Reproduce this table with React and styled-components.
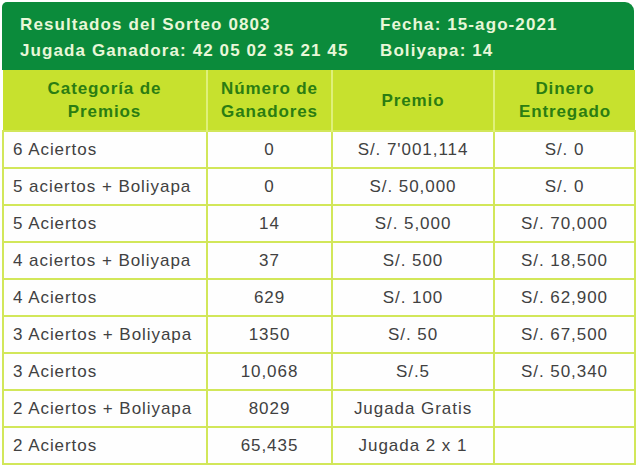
import React from 'react';
import styled, { createGlobalStyle } from 'styled-components';

const GlobalStyle = createGlobalStyle`
  body {
    margin: 0;
    background: #ffffff;
    font-family: "Liberation Sans", Arial, sans-serif;
  }
`;

const Card = styled.div`
  width: 632px;
  margin: 2px 0 0 2px;
`;

const Banner = styled.div`
  display: grid;
  grid-template-columns: 360px 1fr;
  height: 68px;
  box-sizing: border-box;
  padding: 10px 18px 0 18px;
  background: #0b8b3b;
  border-radius: 5px 9px 0 0;
  color: #e8f7d8;
  font-weight: 700;
  font-size: 17px;
  letter-spacing: 1.1px;
  line-height: 26px;
`;

const BannerCol = styled.div`
  display: flex;
  flex-direction: column;
`;

const Table = styled.table`
  width: 632px;
  border-collapse: collapse;
  table-layout: fixed;
  font-family: "Liberation Sans", Arial, sans-serif;
`;

const HeadCell = styled.th`
  height: 60px;
  padding: 0 4px;
  background: #c7e12e;
  color: #2b7d12;
  font-size: 17px;
  font-weight: 700;
  letter-spacing: 0.9px;
  line-height: 23px;
  text-align: center;
  border-left: 2px solid #dff07a;
  &:first-child {
    border-left: none;
  }
`;

const Row = styled.tr`
  height: 37px;
`;

const Cell = styled.td`
  padding: 0 0 0 ${(p) => (p.$left ? '9px' : '0')};
  text-align: ${(p) => (p.$left ? 'left' : 'center')};
  color: #414141;
  font-size: 17px;
  letter-spacing: 0.95px;
  background: #fefefe;
  border: 2px solid #d2e75a;
  white-space: nowrap;
`;

const widths = [204, 125, 162, 141];

const rows = [
  ['6 Aciertos', '0', "S/. 7'001,114", 'S/. 0'],
  ['5 aciertos + Boliyapa', '0', 'S/. 50,000', 'S/. 0'],
  ['5 Aciertos', '14', 'S/. 5,000', 'S/. 70,000'],
  ['4 aciertos + Boliyapa', '37', 'S/. 500', 'S/. 18,500'],
  ['4 Aciertos', '629', 'S/. 100', 'S/. 62,900'],
  ['3 Aciertos + Boliyapa', '1350', 'S/. 50', 'S/. 67,500'],
  ['3 Aciertos', '10,068', 'S/.5', 'S/. 50,340'],
  ['2 Aciertos + Boliyapa', '8029', 'Jugada Gratis', ''],
  ['2 Aciertos', '65,435', 'Jugada 2 x 1', ''],
];

function App() {
  return (
    <>
      <GlobalStyle />
      <Card>
        <Banner>
          <BannerCol>
            <span>Resultados del Sorteo 0803</span>
            <span>Jugada Ganadora: 42 05 02 35 21 45</span>
          </BannerCol>
          <BannerCol>
            <span>Fecha: 15-ago-2021</span>
            <span>Boliyapa: 14</span>
          </BannerCol>
        </Banner>
        <Table>
          <colgroup>
            {widths.map((w) => (
              <col key={w} style={{ width: w }} />
            ))}
          </colgroup>
          <thead>
            <tr>
              <HeadCell>Categoría de<br />Premios</HeadCell>
              <HeadCell>Número de<br />Ganadores</HeadCell>
              <HeadCell>Premio</HeadCell>
              <HeadCell>Dinero<br />Entregado</HeadCell>
            </tr>
          </thead>
          <tbody>
            {rows.map((r) => (
              <Row key={r[0]}>
                <Cell $left>{r[0]}</Cell>
                <Cell>{r[1]}</Cell>
                <Cell>{r[2]}</Cell>
                <Cell>{r[3]}</Cell>
              </Row>
            ))}
          </tbody>
        </Table>
      </Card>
    </>
  );
}

export default App;
